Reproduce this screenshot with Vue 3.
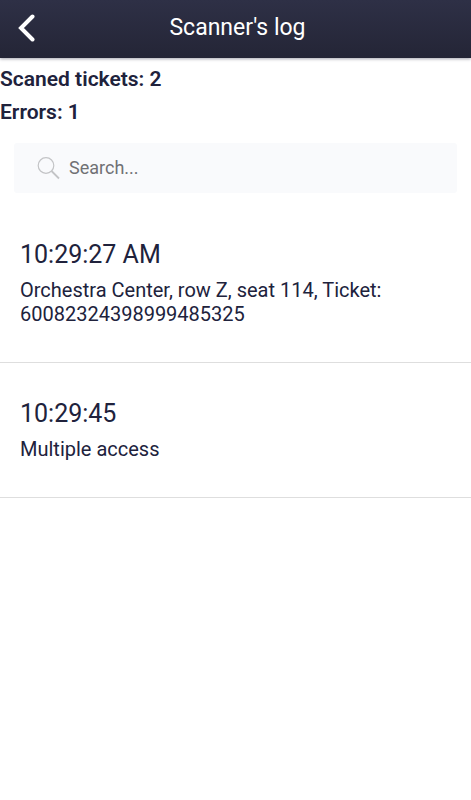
<script setup>
import { ref, computed } from 'vue'

const scanned = ref(2)
const errors = ref(1)
const query = ref('')
const entries = ref([
  { time: '10:29:27 AM', text: 'Orchestra Center, row Z, seat 114, Ticket: 60082324398999485325' },
  { time: '10:29:45', text: 'Multiple access' },
])
const visible = computed(() =>
  entries.value.filter((e) => (e.time + ' ' + e.text).toLowerCase().includes(query.value.toLowerCase())),
)
</script>

<template>
  <div class="page">
    <header class="bar">
      <button class="back" type="button" aria-label="Back">
        <svg width="18" height="28" viewBox="0 0 18 28" fill="none" stroke="#fff" stroke-width="4">
          <path d="M14.500 2.500 3 14l11.500 11.500" stroke-linecap="round" />
        </svg>
      </button>
      <h1 class="title">Scanner's log</h1>
    </header>
    <main>
      <section class="stats">
        <p>Scaned tickets: {{ scanned }}</p>
        <p>Errors: {{ errors }}</p>
      </section>
      <label class="search">
        <svg width="24" height="24" viewBox="0 0 24 24" fill="none" stroke="#c3c4c6">
          <circle cx="9" cy="9.500" r="7.800" stroke-width="1.200" />
          <path d="m14.500 15 7.500 7.500" stroke-width="1.800" />
        </svg>
        <input v-model="query" type="text" placeholder="Search..." aria-label="Search" />
      </label>
      <ul class="log">
        <li v-for="e in visible" :key="e.time" class="entry">
          <h2>{{ e.time }}</h2>
          <p>{{ e.text }}</p>
        </li>
      </ul>
    </main>
  </div>
</template>

<style>
body {
  margin: 0;
  background: #fff;
}
</style>

<style scoped>
.page {
  font-family: Roboto, sans-serif;
  color: #20223c;
}
h1,
h2,
p,
ul {
  margin: 0;
  padding: 0;
}
.bar {
  display: grid;
  grid-template-columns: 56px 1fr 56px;
  align-items: center;
  height: 58px;
  box-sizing: border-box;
  padding-bottom: 3px;
  background: linear-gradient(#2e3046, #242536);
  box-shadow: 0 1px 3px rgba(30, 31, 56, 0.4);
}
.back {
  display: flex;
  padding: 0 0 0 18px;
  border: 0;
  background: none;
}
.title {
  color: #fff;
  font-size: 23px;
  line-height: 28px;
  font-weight: 400;
  text-align: center;
  padding-left: 4px;
}
.stats {
  padding-top: 5px;
  font-size: 21px;
  line-height: 33px;
  font-weight: 600;
}
.search {
  display: flex;
  align-items: center;
  gap: 8px;
  height: 50px;
  margin: 14px 14px 0;
  padding: 0 23px;
  background: #f9fafc;
  border-radius: 3px;
}
.search input {
  flex: 1;
  min-width: 0;
  padding: 0;
  border: 0;
  outline: 0;
  background: none;
  font: 18px/24px Roboto, sans-serif;
  color: inherit;
}
.search input::placeholder {
  color: #707174;
  opacity: 1;
}
.log {
  list-style: none;
  padding-top: 11px;
}
.entry {
  padding: 35px 20px 36px;
  border-bottom: 1px solid #dedede;
}
.entry h2 {
  font-size: 25px;
  line-height: 32px;
  font-weight: 400;
}
.entry p {
  margin-top: 7px;
  font-size: 20px;
  line-height: 24px;
}
</style>
